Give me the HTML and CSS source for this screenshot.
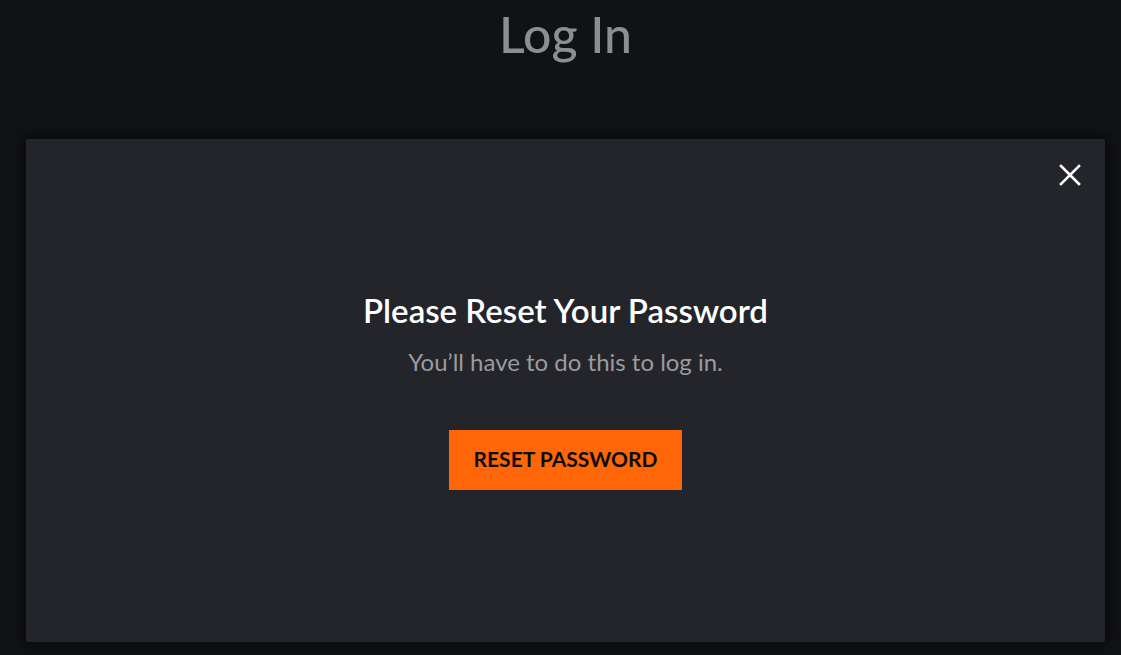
FILE: index.html
```html
<!DOCTYPE html>
<html lang="en">
<head>
    <meta charset="UTF-8">
    <meta name="viewport" content="width=device-width, initial-scale=1.0">
    <title>Log In</title>
    <link rel="stylesheet" href="styles.css">
</head>
<body>
    <div class="page">
        <h1 class="page-title">Log In</h1>

        <div class="modal">
            <button class="modal-close" aria-label="Close">
                <svg width="22" height="22" viewBox="0 0 22 22">
                    <path d="M2 2 L20 20 M20 2 L2 20" stroke="#fff" stroke-width="2.6" stroke-linecap="square"/>
                </svg>
            </button>
            <div class="modal-body">
                <h2 class="modal-title">Please Reset Your Password</h2>
                <p class="modal-text">You’ll have to do this to log in.</p>
                <button class="btn-reset">RESET PASSWORD</button>
            </div>
        </div>
    </div>
</body>
</html>
```

FILE: styles.css
```css
html, body {
    margin: 0;
    height: 100%;
}
body {
    font-family: Lato, 'Open Sans', sans-serif;
    background: #111215;
    overflow: hidden;
}
.page {
    padding: 0 16px 0 26px;
}
.page-title {
    margin: 0;
    padding-top: 5px;
    height: 134px;
    text-align: center;
    font-size: 50px;
    font-weight: 500;
    color: #8d8e91;
    line-height: 58px;
}
.modal {
    position: relative;
    height: 503px;
    background: #24252a;
    border-radius: 2px;
    box-shadow: 0 0 12px 4px rgba(0,0,0,0.45);
}
.modal-close {
    position: absolute;
    top: 25px;
    right: 24px;
    background: none;
    border: none;
    padding: 0;
    cursor: pointer;
    line-height: 0;
}
.modal-body {
    padding-top: 151px;
    text-align: center;
}
.modal-title {
    margin: 0;
    font-size: 33px;
    font-weight: 600;
    color: #ffffff;
    line-height: 40px;
}
.modal-text {
    margin: 17px 0 0;
    font-size: 24px;
    color: #9a9b9e;
    line-height: 30px;
}
.btn-reset {
    display: block;
    margin: 53px auto 0;
    width: 233px;
    height: 60px;
    padding: 0 0 3px;
    background: #ff6608;
    color: #0c0c0c;
    border: none;
    border-radius: 0;
    font-family: Lato, sans-serif;
    font-size: 21px;
    font-weight: 700;
    cursor: pointer;
}
```
